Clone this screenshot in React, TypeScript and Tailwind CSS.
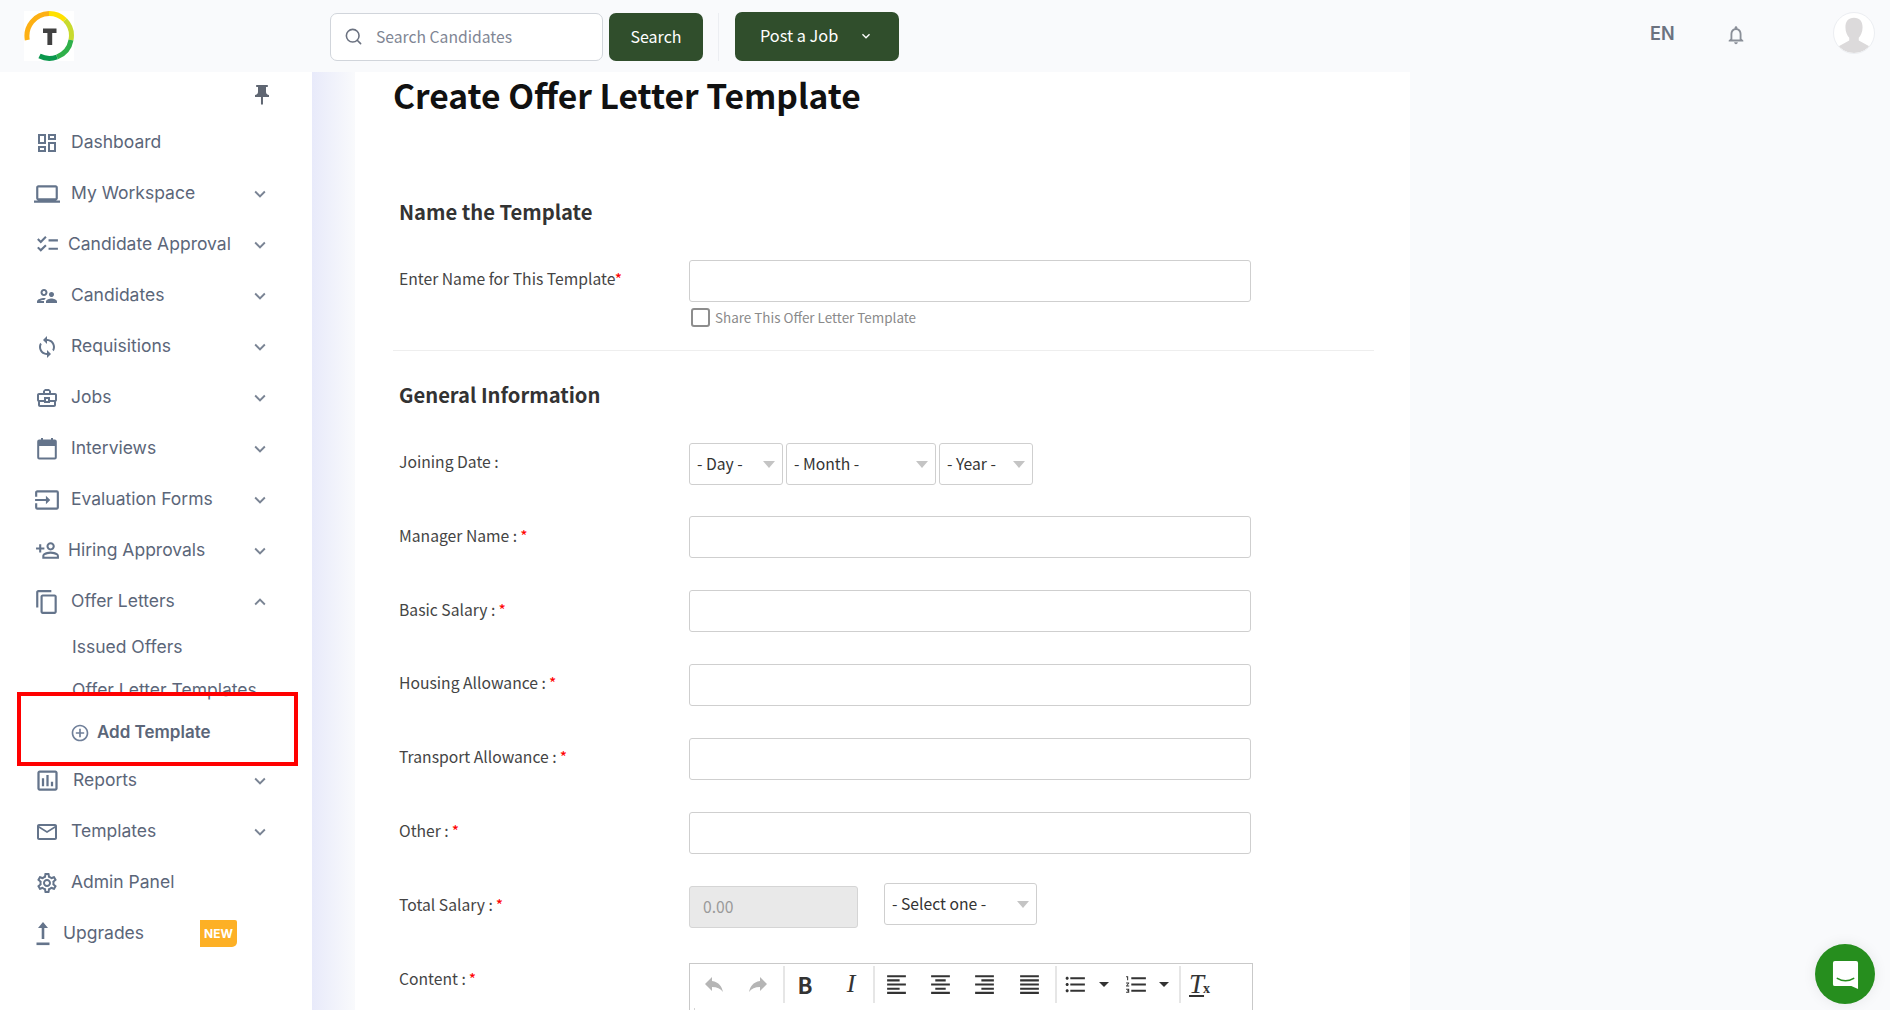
import React from "react";
import {
  MdOutlineDashboard, MdLaptop, MdOutlineChecklist, MdOutlineSupervisorAccount, MdOutlineSync,
  MdOutlineBusinessCenter, MdOutlineInput, MdOutlinePersonAddAlt, MdContentCopy,
  MdOutlineAssessment, MdMailOutline, MdOutlineSettings, MdPushPin, MdOutlineAddCircleOutline,
  MdKeyboardArrowDown, MdKeyboardArrowUp, MdReply, MdFormatAlignLeft, MdFormatAlignCenter, MdFormatAlignRight,
  MdFormatAlignJustify, MdFormatListBulleted, MdFormatListNumbered, MdArrowDropDown, MdOutlineNotifications,
} from "react-icons/md";
import { LuSearch } from "react-icons/lu";

const SANS = "font-['Noto_Sans_CJK_SC','Source_Sans_Pro',sans-serif]";

function UpgradeIcon() {
  return (
    <svg viewBox="0 0 14 24" className="w-[14px] h-[24px]" fill="#64748b">
      <path d="M7 0 L12 6 H8.3 V17 H5.7 V6 H2 Z" />
      <rect x="0.5" y="20.5" width="13" height="2.6" />
    </svg>
  );
}

function CalendarIcon() {
  return (
    <svg viewBox="0 0 24 24" className="w-[24px] h-[24px]" fill="none">
      <rect x="3.2" y="3.5" width="17.6" height="18" rx="1" stroke="#64748b" strokeWidth="2" />
      <rect x="3" y="3" width="18" height="6" fill="#64748b" />
      <rect x="6" y="1" width="2" height="3" fill="#64748b" />
      <rect x="16" y="1" width="2" height="3" fill="#64748b" />
    </svg>
  );
}

function Row({ icon, label, chevron = "down", textClass = "ml-[12px]" }: any) {
  return (
    <div className="h-[51px] flex items-center pl-[35px] pr-[41px] shrink-0">
      <div className="w-[24px] h-[24px] flex items-center justify-center text-[#64748b] shrink-0">{icon}</div>
      <span className={`${textClass} flex-1 text-[17.5px] text-[#5b6679] whitespace-nowrap`}>{label}</span>
      {chevron === "down" && <MdKeyboardArrowDown className="text-[#7a8494] w-[22px] h-[22px]" />}
      {chevron === "up" && <MdKeyboardArrowUp className="text-[#7a8494] w-[22px] h-[22px]" />}
    </div>
  );
}

function Sidebar() {
  const i = "w-[24px] h-[24px]";
  return (
    <aside className="w-[312px] shrink-0 bg-white relative flex flex-col font-['Inter',sans-serif] overflow-hidden">
      <div className="h-[45px] flex items-center justify-end pr-[38px] pt-[1px] shrink-0">
        <MdPushPin className="w-[24px] h-[24px] text-[#5f6672]" />
      </div>
      <Row icon={<MdOutlineDashboard className={i} />} label="Dashboard" chevron="none" />
      <Row icon={<MdLaptop className="w-[26px] h-[26px] shrink-0" />} label="My Workspace" />
      <Row icon={<MdOutlineChecklist className="w-[25px] h-[25px] shrink-0" />} label="Candidate Approval" textClass="ml-[9px]" />
      <Row icon={<MdOutlineSupervisorAccount className={i} />} label="Candidates" />
      <Row icon={<MdOutlineSync className={i} />} label="Requisitions" />
      <Row icon={<MdOutlineBusinessCenter className={i} />} label="Jobs" />
      <Row icon={<CalendarIcon />} label="Interviews" />
      <Row icon={<MdOutlineInput className="w-[26px] h-[26px] shrink-0" />} label="Evaluation Forms" />
      <Row icon={<MdOutlinePersonAddAlt className="w-[25px] h-[25px] shrink-0 -scale-x-100" />} label="Hiring Approvals" textClass="ml-[9px]" />
      <Row icon={<MdContentCopy className="w-[26px] h-[26px] shrink-0" />} label="Offer Letters" chevron="up" />
      <div className="h-[42px] flex items-center pl-[72px] pb-[1px] text-[17.5px] text-[#5b6679] shrink-0">Issued Offers</div>
      <div className="h-[43px] flex items-center pl-[72px] text-[17.5px] text-[#5b6679] shrink-0">Offer Letter Templates</div>
      <div className="h-[43px] flex items-center pl-[70px] pb-[2px] text-[17px] text-[#5b6679] font-semibold shrink-0">
        <MdOutlineAddCircleOutline className="w-[20px] h-[20px] text-[#6f7f99] mr-[7px]" />
        Add Template
      </div>
      <Row icon={<MdOutlineAssessment className="w-[27px] h-[27px] shrink-0" />} label="Reports" textClass="ml-[14px]" />
      <Row icon={<MdMailOutline className={i} />} label="Templates" />
      <Row icon={<MdOutlineSettings className={i} />} label="Admin Panel" chevron="none" />
      <div className="h-[51px] flex items-center pl-[36px] shrink-0 text-[17.5px] text-[#5b6679]">
        <UpgradeIcon />
        <span className="ml-[13px] w-[137px]">Upgrades</span>
        <span className="w-[37px] h-[27px] bg-[#fdb025] rounded-tr-[2px] rounded-br-[5px] flex items-center justify-center text-white text-[12px] font-bold">NEW</span>
      </div>
      <div className="absolute left-[17px] top-[620px] w-[281px] h-[74px] border-[4px] border-[#ff0000]" />
    </aside>
  );
}

function Logo() {
  return (
    <div className="w-[50px] h-[50px] bg-white">
      <svg viewBox="0 0 50 50" className="w-[50px] h-[50px]" fill="none">
        <g strokeWidth="5">
          <path d="M3.3 29 A22.5 22.5 0 0 1 25 2.5" stroke="#fdb014" />
          <path d="M25 2.5 A22.5 22.5 0 0 1 41 9" stroke="#ffe100" />
          <path d="M41 9 A22.5 22.5 0 0 1 47 29" stroke="#c8da2e" />
          <path d="M47 29 A22.5 22.5 0 0 1 33 46" stroke="#2fb04a" />
          <path d="M33 46 A22.5 22.5 0 0 1 15.5 45" stroke="#0b974d" />
        </g>
        <path d="M19 17.5 H32.5 V22 H28.2 V34 H23.4 V22 H19 Z" fill="#414141" />
      </svg>
    </div>
  );
}

function Header() {
  return (
    <header className={`h-[72px] shrink-0 bg-[#f9fafc] flex items-start ${SANS}`}>
      <div className="ml-[24px] mt-[11px]"><Logo /></div>
      <div className="ml-[256px] mt-[13px] w-[273px] h-[48px] bg-white border border-[#d1d5db] rounded-[7px] flex items-center pl-[13px] pb-[1px]">
        <LuSearch className="w-[19px] h-[19px] text-[#6b7280]" />
        <span className="ml-[13px] text-[15.7px] text-[#7f8694]">Search Candidates</span>
      </div>
      <div className="ml-[6px] mt-[13px] w-[94px] h-[48px] bg-[#304e2c] rounded-[7px] flex items-center justify-center pb-[3px] text-white text-[16px]">Search</div>
      <div className="ml-[15px] mt-[13px] w-px h-[48px] bg-[#eceef2]" />
      <div className="ml-[16px] mt-[12px] w-[164px] h-[49px] bg-[#304e2c] rounded-[7px] flex items-center pl-[25px] pb-[2px] text-white text-[16.3px]">
        Post a Job
        <MdKeyboardArrowDown className="ml-[20px] w-[16px] h-[16px]" />
      </div>
      <div className="ml-auto mt-[20px] w-[26px] text-[18px] font-semibold text-[#6b7280] font-['Inter',sans-serif]">EN</div>
      <MdOutlineNotifications className="ml-[49px] mt-[24px] w-[22px] h-[22px] text-[#8a8f98]" />
      <div className="ml-[86px] mr-[15px] mt-[12px] w-[42px] h-[42px] rounded-full bg-white border border-[#eceef2] overflow-hidden">
        <svg viewBox="0 0 42 42" className="w-full h-full" fill="#dcdadb">
          <path d="M21 5 C15 5 12 9 12 15 C12 20 14 24 16 26 V29 L5 35 C9 40 15 42 21 42 C27 42 33 40 37 35 L26 29 V26 C28 24 30 20 30 15 C30 9 27 5 21 5 Z" />
        </svg>
      </div>
    </header>
  );
}

function Req() {
  return <span className="text-[#ff0000] ml-[3px]">*</span>;
}

function Label({ children, className = "pt-[7px]" }: any) {
  return <div className={`w-[290px] shrink-0 text-[15.7px] text-[#444] leading-[24px] whitespace-nowrap ${className}`}>{children}</div>;
}

const inputCls = "h-[42px] w-[562px] border border-[#cfcfcf] rounded-[3px] bg-white";

function Select({ label, w }: { label: string; w: string }) {
  return (
    <div className={`${w} h-[42px] border border-[#cfcfcf] rounded-[3px] bg-white flex items-center justify-between pl-[7px] pr-[7px] text-[15.7px] text-[#333]`}>
      <span>{label}</span>
      <span className="w-0 h-0 border-l-[6px] border-r-[6px] border-t-[7px] border-l-transparent border-r-transparent border-t-[#c4c4c4]" />
    </div>
  );
}

function FieldRow({ label, className = "mt-[32px]", labelClass = "pt-[7px]" }: any) {
  return (
    <div className={`flex ${className}`}>
      <Label className={labelClass}>{label}<Req /></Label>
      <div className={inputCls} />
    </div>
  );
}

function Sep() {
  return <span className="block w-[2px] h-[37px] bg-[#e6e6e6] shrink-0" />;
}

function Toolbar() {
  const ic = "w-[25px] h-[25px] text-[#333] shrink-0";
  return (
    <div className="w-[564px] h-[60px] border border-[#c9c9c9] border-b-0 flex flex-col">
      <div className="h-[40px] flex items-center pl-[12px] shrink-0">
        <MdReply className="w-[24px] h-[24px] text-[#b5b5b5] shrink-0" />
        <MdReply className="ml-[20px] w-[24px] h-[24px] text-[#b5b5b5] -scale-x-100 shrink-0" />
        <span className="ml-[13px]"><Sep /></span>
        <span className="ml-[12px] w-[16px] text-center text-[22px] leading-none font-bold text-[#333]">B</span>
        <span className="ml-[29px] w-[18px] text-center text-[26px] leading-none italic text-[#333] font-['Liberation_Serif',serif]">I</span>
        <span className="ml-[13px]"><Sep /></span>
        <MdFormatAlignLeft className={`ml-[9px] ${ic}`} />
        <MdFormatAlignCenter className={`ml-[19px] ${ic}`} />
        <MdFormatAlignRight className={`ml-[19px] ${ic}`} />
        <MdFormatAlignJustify className={`ml-[20px] ${ic}`} />
        <span className="ml-[13px]"><Sep /></span>
        <MdFormatListBulleted className={`ml-[6px] ${ic}`} />
        <MdArrowDropDown className="ml-[4px] w-[24px] h-[24px] text-[#333] shrink-0" />
        <MdFormatListNumbered className={`ml-[8px] ${ic}`} />
        <MdArrowDropDown className="ml-[3px] w-[24px] h-[24px] text-[#333] shrink-0" />
        <span className="ml-[3px]"><Sep /></span>
        <span className="ml-[8px] flex items-baseline leading-none text-[#333] font-['Liberation_Serif',serif]">
          <span className="text-[27px] italic underline">T</span>
          <span className="text-[14px] font-bold -ml-[1px]">x</span>
        </span>
      </div>
      <div className="ml-[4px] flex-1 border-l border-[#d5d5d5] mt-[4px]" />
    </div>
  );
}

function Form() {
  return (
    <main className={`w-[1055px] shrink-0 bg-white pl-[38px] pr-[36px] ${SANS}`}>
      <h1 className="text-[33.6px] font-bold leading-[46px] text-[#111] whitespace-nowrap">Create Offer Letter Template</h1>
      <div className="pl-[6px]">
        <h2 className="mt-[79px] text-[20.2px] font-bold leading-[30px] text-[#333]">Name the Template</h2>
        <div className="flex mt-[33px]">
          <Label>Enter Name for This Template<span className="text-[#ff0000]">*</span></Label>
          <div className={inputCls} />
        </div>
        <div className="flex items-center ml-[292px] mt-[5px] h-[20px]">
          <div className="w-[19px] h-[19px] border-2 border-[#8d8d8d] rounded-[3px]" />
          <span className="ml-[5px] text-[13.45px] text-[#8a8a8a]">Share This Offer Letter Template</span>
        </div>
      </div>
      <div className="h-px bg-[#eeeeee] mt-[23px]" />
      <div className="pl-[6px]">
        <h2 className="mt-[29px] text-[20.2px] font-bold leading-[30px] text-[#333]">General Information</h2>
        <div className="flex mt-[33px]">
          <Label>Joining Date :</Label>
          <div className="flex gap-[3px]">
            <Select label="- Day -" w="w-[94px]" />
            <Select label="- Month -" w="w-[150px]" />
            <Select label="- Year -" w="w-[94px]" />
          </div>
        </div>
        <FieldRow label="Manager Name :" className="mt-[31px]" labelClass="pt-[8px]" />
        <FieldRow label="Basic Salary :" labelClass="pt-[8px]" />
        <FieldRow label="Housing Allowance :" />
        <FieldRow label="Transport Allowance :" />
        <FieldRow label="Other :" />
        <div className="flex mt-[32px]">
          <Label>Total Salary :<Req /></Label>
          <div className="w-[169px] h-[42px] bg-[#e9e9e9] border border-[#d5d5d5] rounded-[3px] flex items-center pl-[13px] text-[15.7px] text-[#9a9a9a]">0.00</div>
          <div className="ml-[26px] -mt-[3px]"><Select label="- Select one -" w="w-[153px]" /></div>
        </div>
        <div className="flex mt-[35px]">
          <Label className="pt-[4px]">Content :<Req /></Label>
          <Toolbar />
        </div>
      </div>
    </main>
  );
}

function Chat() {
  return (
    <div className="absolute left-[1815px] top-[944px] w-[60px] h-[60px] rounded-full bg-[#268e1e] flex items-center justify-center shadow-[0_0_14px_rgba(0,0,0,0.08)]">
      <svg viewBox="0 0 28 32" className="w-[27px] h-[31px] mt-[2px]">
        <path d="M3 1 H25 A2 2 0 0 1 27 3 V30 L20 27 H3 A2 2 0 0 1 1 25 V3 A2 2 0 0 1 3 1 Z" fill="#fff" />
        <path d="M5.5 19 Q14 24 22.5 19" fill="none" stroke="#268e1e" strokeWidth="1.6" strokeLinecap="round" />
      </svg>
    </div>
  );
}

export default function App() {
  return (
    <div className="relative w-[1890px] h-[1010px] overflow-hidden bg-[#f9fafc] flex flex-col">
      <Header />
      <div className="flex flex-1 min-h-0">
        <Sidebar />
        <div className="w-[43px] shrink-0 bg-gradient-to-r from-[#e8eafa] to-[#f9fafc]" />
        <Form />
      </div>
      <Chat />
    </div>
  );
}
